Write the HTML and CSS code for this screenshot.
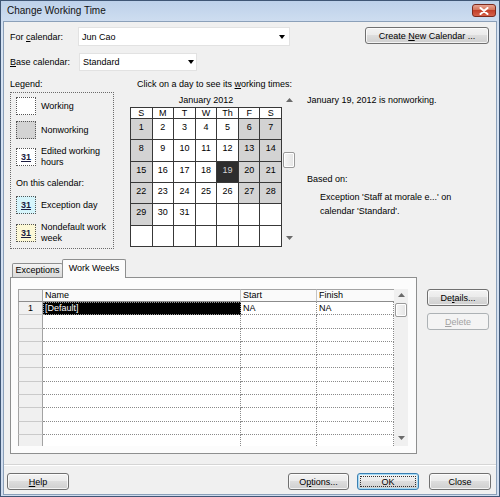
FILE: index.html
```html
<!DOCTYPE html>
<html>
<head>
<meta charset="utf-8">
<title>Change Working Time</title>
<link rel="stylesheet" href="styles.css">
</head>
<body>
<div class="window">
  <div class="titlebar">
    <span class="title">Change Working Time</span>
    <div class="close"><svg width="10" height="8" viewBox="0 0 10 8"><path d="M1.5 1 L8.5 7 M8.5 1 L1.5 7" stroke="#fff" stroke-width="2" stroke-linecap="round"/></svg></div>
  </div>
  <div class="frame">
    <div class="client">
      <div class="top">
        <div class="fields">
          <label>For <u>c</u>alendar:</label>
          <div class="combo wide"><span>Jun Cao</span><i class="arrow"></i></div>
          <label><u>B</u>ase calendar:</label>
          <div class="combo narrow"><span>Standard</span><i class="arrow"></i></div>
        </div>
        <button class="btn create">Create <u>N</u>ew Calendar ...</button>
      </div>

      <div class="middle">
        <div class="legend-col">
          <div class="caption">Legend:</div>
          <div class="legend">
            <div class="item"><div class="sw"></div><span>Working</span></div>
            <div class="item i2"><div class="sw nonwork"></div><span>Nonworking</span></div>
            <div class="item i3"><div class="sw"><b>31</b></div><span>Edited working<br>hours</span></div>
            <div class="caption oncal">On this calendar:</div>
            <div class="item i4"><div class="sw exc"><b>31</b></div><span>Exception day</span></div>
            <div class="item i5"><div class="sw nondef"><b>31</b></div><span>Nondefault work<br>week</span></div>
          </div>
        </div>

        <div class="cal-col">
          <div class="caption click">Click on a day to see its <u>w</u>orking times:</div>
          <div class="cal-body">
            <div class="cal">
              <div class="month">January 2012</div>
              <div class="grid">
                <div class="hd">S</div><div class="hd">M</div><div class="hd">T</div><div class="hd">W</div><div class="hd">Th</div><div class="hd">F</div><div class="hd">S</div>
                <div class="we">1</div><div>2</div><div>3</div><div>4</div><div>5</div><div class="we">6</div><div class="we">7</div>
                <div class="we">8</div><div>9</div><div>10</div><div>11</div><div>12</div><div class="we">13</div><div class="we">14</div>
                <div class="we">15</div><div>16</div><div>17</div><div>18</div><div class="sel">19</div><div class="we">20</div><div class="we">21</div>
                <div class="we">22</div><div>23</div><div>24</div><div>25</div><div>26</div><div class="we">27</div><div class="we">28</div>
                <div class="we">29</div><div>30</div><div>31</div><div></div><div></div><div></div><div></div>
                <div></div><div></div><div></div><div></div><div></div><div></div><div></div>
              </div>
            </div>
            <div class="cal-scroll">
              <div class="sarrow"><svg width="7" height="4" viewBox="0 0 7 4"><path d="M0 4 L3.5 0 L7 4 Z" fill="#6a6a6a"/></svg></div>
              <div class="thumb cthumb"></div>
              <div class="sarrow down"><svg width="7" height="4" viewBox="0 0 7 4"><path d="M0 0 L3.5 4 L7 0 Z" fill="#6a6a6a"/></svg></div>
            </div>
          </div>
        </div>

        <div class="info-col">
          <div class="info1">January 19, 2012 is nonworking.</div>
          <div class="based">Based on:</div>
          <div class="exc-text">Exception 'Staff at morale e...' on<br>calendar 'Standard'.</div>
        </div>
      </div>

      <div class="lower">
        <div class="tabs">
          <div class="tabstrip">
            <div class="tab off">Exceptions</div>
            <div class="tab on">Work Weeks</div>
          </div>
          <div class="panel">
            <div class="sheet">
              <div class="sheet-grid">
                <div class="row hdr"><div class="rh"></div><div class="hc">Name</div><div class="hc">Start</div><div class="hc last">Finish</div></div>
                <div class="row"><div class="rh">1</div><div class="c cur">[Default]</div><div class="c">NA</div><div class="c">NA</div></div>
                <div class="row"><div class="rh"></div><div class="c"></div><div class="c"></div><div class="c"></div></div>
                <div class="row"><div class="rh"></div><div class="c"></div><div class="c"></div><div class="c"></div></div>
                <div class="row"><div class="rh"></div><div class="c"></div><div class="c"></div><div class="c"></div></div>
                <div class="row"><div class="rh"></div><div class="c"></div><div class="c"></div><div class="c"></div></div>
                <div class="row"><div class="rh"></div><div class="c"></div><div class="c"></div><div class="c"></div></div>
                <div class="row"><div class="rh"></div><div class="c"></div><div class="c"></div><div class="c"></div></div>
                <div class="row"><div class="rh"></div><div class="c"></div><div class="c"></div><div class="c"></div></div>
                <div class="row"><div class="rh"></div><div class="c"></div><div class="c"></div><div class="c"></div></div>
                <div class="row"><div class="rh"></div><div class="c"></div><div class="c"></div><div class="c"></div></div>
                <div class="row"><div class="rh"></div><div class="c"></div><div class="c"></div><div class="c"></div></div>
              </div>
              <div class="vs">
                <div class="sarrow"><svg width="7" height="4" viewBox="0 0 7 4"><path d="M0 4 L3.5 0 L7 4 Z" fill="#6a6a6a"/></svg></div>
                <div class="thumb sthumb"></div>
                <div class="sarrow down"><svg width="7" height="4" viewBox="0 0 7 4"><path d="M0 0 L3.5 4 L7 0 Z" fill="#6a6a6a"/></svg></div>
              </div>
            </div>
          </div>
        </div>
        <div class="side">
          <button class="btn">De<u>t</u>ails...</button>
          <button class="btn disabled"><u>D</u>elete</button>
        </div>
      </div>

      <div class="sep"></div>

      <div class="bottom">
        <button class="btn"><u>H</u>elp</button>
        <button class="btn options">O<u>p</u>tions...</button>
        <button class="btn ok">OK</button>
        <button class="btn closebtn">Close</button>
      </div>
    </div>
  </div>
</div>
</body>
</html>
```

FILE: styles.css
```css
* { box-sizing: border-box; }
html, body { margin: 0; padding: 0; }
body {
  width: 500px;
  height: 497px;
  overflow: hidden;
  font-family: "Liberation Sans", Arial, sans-serif;
  font-size: 9px;
  color: #000;
  background: #fff;
}
u { text-decoration: underline; }

.window {
  width: 500px;
  height: 497px;
  border: 1px solid #3f5675;
  background: linear-gradient(#bdd1ea, #d6e3f3 30px, #cfdcee);
  display: flex;
  flex-direction: column;
}
.titlebar {
  height: 20px;
  display: flex;
  align-items: flex-start;
  padding: 0 3px 0 6px;
}
.title { font-size: 10px; line-height: 20px; color: #111; }
.close {
  margin-left: auto;
  margin-top: 3px;
  width: 24px;
  height: 13px;
  border: 1px solid #7b2a1e;
  border-radius: 3px;
  background: linear-gradient(#e8a493, #d4735a 45%, #c2402a 50%, #d6614a);
  display: flex;
  align-items: center;
  justify-content: center;
}
.frame { padding: 0 2px 1px; flex: 1; display: flex; }
.client {
  width: 494px;
  height: 474px;
  border: 1px solid #8ba0b9;
  background: #f0f0f0;
}

/* top */
.top { display: flex; height: 49px; padding: 5px 7px 0 6px; }
.fields {
  display: grid;
  grid-template-columns: 68px auto;
  grid-template-rows: 19px 18px;
  row-gap: 7px;
  align-items: center;
}
.fields label { line-height: 12px; }
.combo {
  display: flex;
  align-items: center;
  height: 100%;
  background: #fff;
  border: 1px solid #e2e2e2;
  padding: 0 4px 0 3px;
}
.combo span { flex: 1; }
.combo.wide { width: 212px; }
.combo.narrow { width: 118px; margin-left: 1px; padding-right: 2px; }
.arrow {
  width: 0; height: 0;
  border-left: 3.5px solid transparent;
  border-right: 3.5px solid transparent;
  border-top: 4px solid #000;
}

.btn {
  font-family: inherit;
  font-size: 9px;
  color: #000;
  padding: 0;
  height: 17px;
  border: 1px solid #707070;
  border-radius: 3px;
  background: linear-gradient(#f3f3f3, #ebebeb 45%, #dddddd 50%, #cfcfcf);
  box-shadow: inset 0 0 0 1px rgba(255,255,255,0.75);
  text-align: center;
  white-space: nowrap;
}
.create { margin-left: auto; width: 124px; }

/* middle */
.middle { display: flex; margin-top: 7px; height: 171px; padding-left: 6px; }
.caption { line-height: 12px; height: 12px; white-space: nowrap; }
.legend-col { width: 104px; }
.legend {
  margin-top: 2px;
  height: 157px;
  border: 1px dotted #6a6a6a;
  padding: 4px 0 0 5px;
}
.item { display: flex; align-items: center; gap: 5px; line-height: 11px; }
.i2 { margin-top: 6px; }
.i3 { margin-top: 7px; }
.oncal { margin-top: 9px; }
.i4 { margin-top: 7px; }
.i5 { margin-top: 8px; }
.sw {
  width: 20px;
  height: 18px;
  flex: none;
  border: 1px dotted #555;
  background: #fff;
  display: flex;
  align-items: center;
  justify-content: center;
}
.sw b { font-size: 9px; text-decoration: underline; color: #1b1b40; }
.sw.nonwork { background: #d3d3d3; }
.sw.exc { background: #d6f5fb; }
.sw.nondef { background: #fcf8d6; }

.cal-col { margin-left: 16px; width: 165px; }
.click { padding-left: 7px; }
.cal-body { display: flex; margin-top: 4px; }
.cal { width: 152px; }
.month { height: 13px; line-height: 13px; text-align: center; }
.grid {
  display: grid;
  grid-template-columns: repeat(7, 1fr);
  grid-template-rows: 10px repeat(6, 1fr);
  gap: 1px;
  height: 140px;
  background: #383838;
  border: 1px solid #383838;
}
.grid div { background: #fff; text-align: center; line-height: 12px; padding-top: 2px; }
.grid .hd { padding-top: 0; line-height: 10px; }
.grid .we { background: #d3d3d3; }
.grid .sel { background: #2e2e2e; color: #d4d4d4; }

.cal-scroll {
  width: 12px;
  height: 150px;
  margin-left: 1px;
  display: flex;
  flex-direction: column;
  align-items: center;
}
.sarrow { height: 12px; width: 12px; display: flex; align-items: center; justify-content: center; flex: none; }
.sarrow.down { margin-top: auto; }
.thumb {
  width: 12px;
  border: 1px solid #9a9a9a;
  border-radius: 2px;
  background: linear-gradient(90deg, #f7f7f7, #e4e4e4);
  box-shadow: inset 0 0 0 1px #fff;
  flex: none;
}
.cthumb { margin-top: 46px; height: 16px; }

.info-col { margin-left: 12px; }
.info1 { margin-top: 16px; line-height: 12px; }
.based { margin-top: 67px; line-height: 12px; }
.exc-text { margin-top: 5px; padding-left: 13px; line-height: 14px; }

/* lower */
.lower { display: flex; margin-top: 10px; padding-left: 6px; height: 195px; }
.tabs { width: 407px; }
.tabstrip { display: flex; height: 18px; padding-left: 2px; align-items: flex-end; }
.tab {
  border: 1px solid #8e8f8f;
  border-bottom: none;
  border-radius: 2px 2px 0 0;
  text-align: center;
  white-space: nowrap;
}
.tab.off {
  width: 51px;
  height: 14px;
  line-height: 13px;
  background: linear-gradient(#f4f4f4, #e6e6e6 50%, #dadada);
}
.tab.on {
  width: 64px;
  height: 19px;
  line-height: 17px;
  margin-left: -1px;
  margin-bottom: -1px;
  background: #fcfcfc;
  position: relative;
  z-index: 1;
}
.panel {
  height: 177px;
  border: 1px solid #8e8f8f;
  background: #fcfcfc;
  padding: 11px 8px 7px 7px;
}
.sheet { display: flex; height: 157px; }
.sheet-grid { width: 376px; height: 157px; overflow: hidden; background: #fff; }
.row {
  display: grid;
  grid-template-columns: 25px 198px 76px 77px;
  height: 13.3px;
}
.row.hdr { height: 13px; }
.rh {
  background: #f0f0f0;
  border-left: 1px solid #a3a3a3;
  border-right: 1px solid #a3a3a3;
  border-bottom: 1px solid #cacaca;
  text-align: center;
  line-height: 12px;
}
.hdr .rh { border-top: 1px solid #a3a3a3; border-bottom: 1px solid #8c8c8c; }
.hc {
  background: #fafafa;
  border-top: 1px solid #a3a3a3;
  border-bottom: 1px solid #8c8c8c;
  border-right: 1px solid #c4c4c4;
  padding-left: 2px;
  line-height: 11px;
}
.hc.last { border-right: none; }
.c {
  background: #fff;
  border-right: 1px dotted #8a8a8a;
  border-bottom: 1px dotted #8a8a8a;
  padding-left: 2px;
  line-height: 12px;
  white-space: nowrap;
  overflow: hidden;
}
.c.cur { background: #000; color: #fff; outline: 1px dotted #9a9a9a; outline-offset: -1px; }
.vs {
  width: 14px;
  height: 157px;
  background: #f0f0f0;
  display: flex;
  flex-direction: column;
  align-items: center;
  padding-bottom: 2px;
}
.sthumb { margin-top: 2px; height: 14px; }

.side {
  margin-left: 10px;
  margin-top: 30px;
  display: flex;
  flex-direction: column;
  gap: 7px;
  width: 62px;
}
.btn.disabled {
  color: #a3a3a3;
  border-color: #adb2b5;
  background: #f4f4f4;
  box-shadow: none;
}

.sep { margin-top: 10px; height: 2px; border-top: 1px solid #d5d5d5; border-bottom: 1px solid #fff; }
.bottom { display: flex; padding: 0 5px 0 3px; margin-top: 7px; }
.bottom .btn { width: 62px; }
.bottom .options { margin-left: auto; width: 61px; }
.bottom .ok {
  margin-left: 8px;
  border-color: #3c7fb1;
  box-shadow: inset 0 0 0 1px #a6dcf7;
  outline: 1px dotted #333;
  outline-offset: -4px;
}
.bottom .closebtn { margin-left: 10px; }
```
